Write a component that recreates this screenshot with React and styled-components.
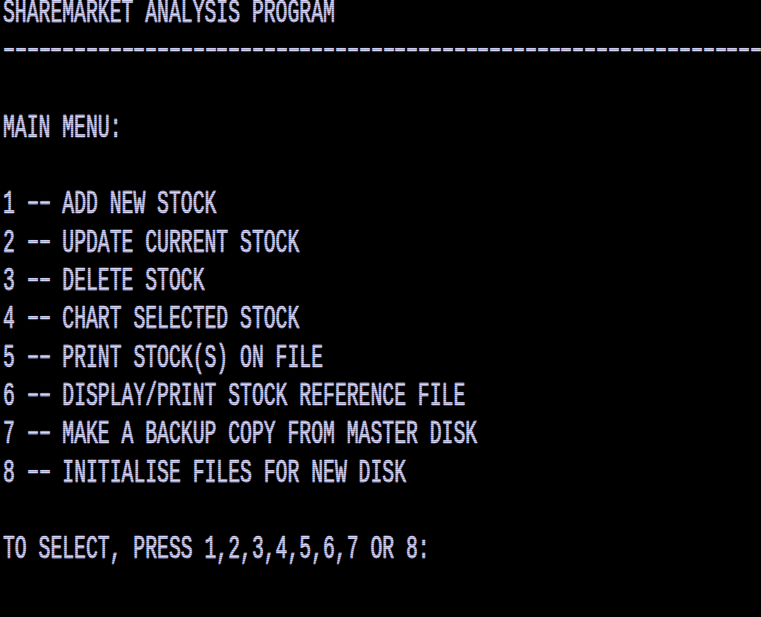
import React from "react";
import styled, { createGlobalStyle } from "styled-components";

const GlobalStyle = createGlobalStyle`
  html, body {
    margin: 0;
    padding: 0;
    background: #000;
  }
  #root {
    min-height: 100vh;
    background: #000;
  }
`;

const Screen = styled.div`
  position: relative;
  width: 761px;
  height: 617px;
  overflow: hidden;
  background: #000;
  display: flex;
  flex-direction: column;
  padding-left: 3px;
  box-sizing: border-box;
`;

const Line = styled.div`
  height: 38.3px;
  flex: none;
  white-space: pre;
`;

const Text = styled.span`
  display: block;
  font-family: "Liberation Mono", "DejaVu Sans Mono", monospace;
  font-size: 19.75px;
  line-height: 17px;
  color: #d6d6f8;
  transform: scaleY(1.7);
  transform-origin: 0 0;
  text-shadow: 0 0 1px rgba(200, 200, 255, 0.6);
  -webkit-text-stroke: 0.35px #d6d6f8;
`;

// the old screen font draws its minus sign wide, at mid cap height
const Dash = styled.span`
  display: inline-block;
  transform: translateY(-0.9px) scaleX(1.65);
`;

const Scanlines = styled.div`
  position: absolute;
  inset: 0;
  pointer-events: none;
  background: repeating-linear-gradient(
    to bottom,
    rgba(0, 0, 0, 0) 0px,
    rgba(0, 0, 0, 0) 1px,
    rgba(0, 0, 0, 0.22) 1px,
    rgba(0, 0, 0, 0.22) 2px
  );
`;

const lines = [
  "SHAREMARKET ANALYSIS PROGRAM",
  "-".repeat(64),
  "",
  "MAIN MENU:",
  "",
  "1 -- ADD NEW STOCK",
  "2 -- UPDATE CURRENT STOCK",
  "3 -- DELETE STOCK",
  "4 -- CHART SELECTED STOCK",
  "5 -- PRINT STOCK(S) ON FILE",
  "6 -- DISPLAY/PRINT STOCK REFERENCE FILE",
  "7 -- MAKE A BACKUP COPY FROM MASTER DISK",
  "8 -- INITIALISE FILES FOR NEW DISK",
  "",
  "TO SELECT, PRESS 1,2,3,4,5,6,7 OR 8:",
];

const renderLine = (text) =>
  text.split(/(-+)/).map((part, i) =>
    part.startsWith("-")
      ? part.split("").map((d, j) => <Dash key={`${i}-${j}`}>{d}</Dash>)
      : part
  );

export default function App() {
  return (
    <>
      <GlobalStyle />
      <Screen>
        {lines.map((l, i) => (
          <Line key={i}>
            <Text>{l ? renderLine(l) : " "}</Text>
          </Line>
        ))}
        <Scanlines />
      </Screen>
    </>
  );
}
